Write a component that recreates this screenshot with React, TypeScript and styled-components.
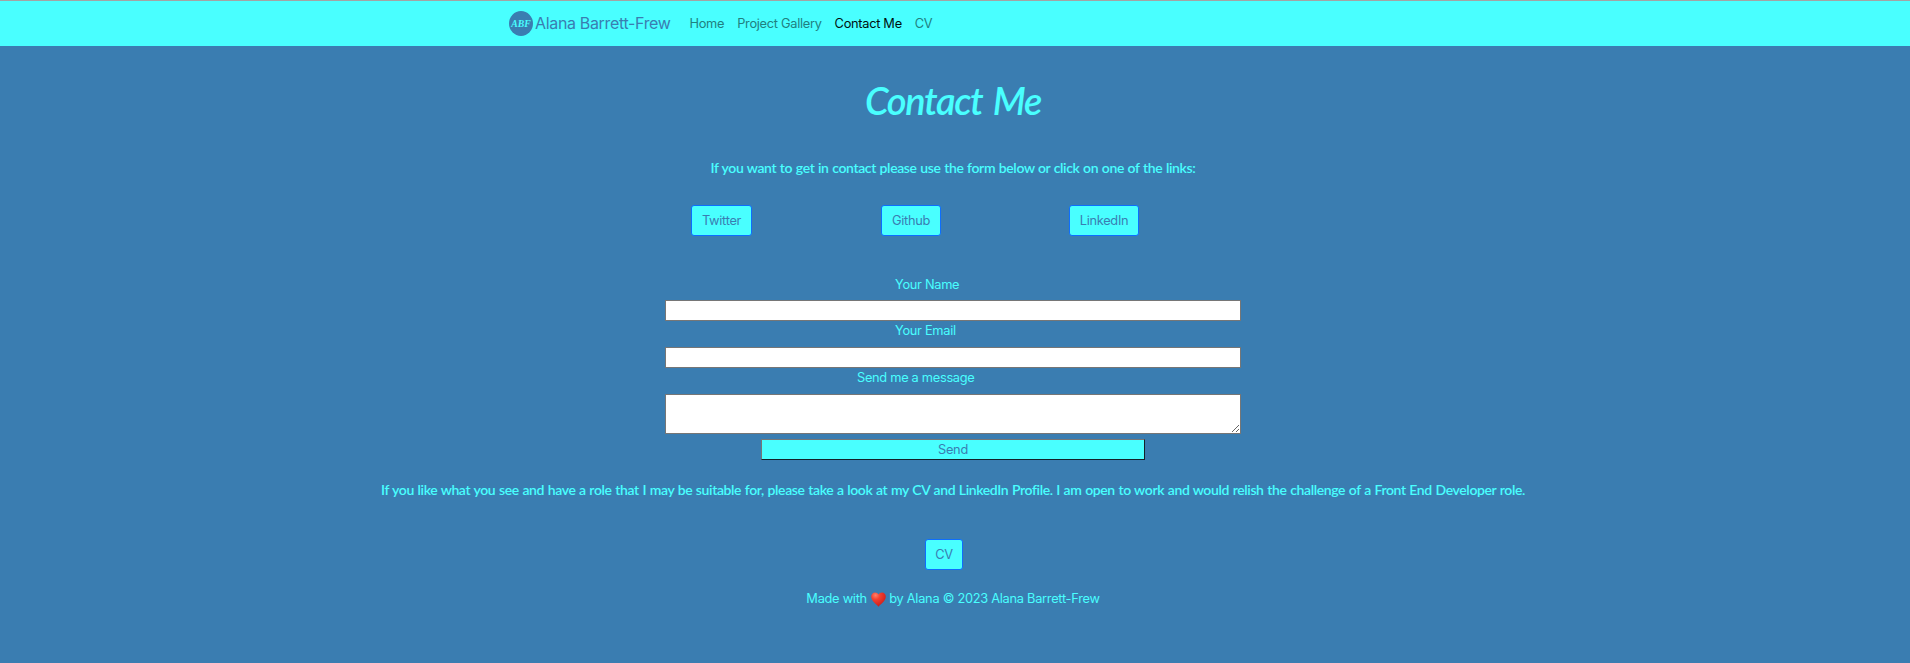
import React from 'react';
import styled, { createGlobalStyle } from 'styled-components';

const CYAN = '#49ffff';
const BLUE = '#3a7db1';

const GlobalStyle = createGlobalStyle`
  *, *::before, *::after { box-sizing: border-box; }
  body {
    margin: 0;
    background: ${BLUE};
    color: ${CYAN};
    font: 400 12.8px/20px Inter, "Liberation Sans", sans-serif;
    letter-spacing: -0.29px;
  }
`;

const Page = styled.div`
  min-height: 663px;
  overflow: hidden;
`;

const Navbar = styled.nav`
  display: flex;
  align-items: center;
  height: 46px;
  padding-left: 509px;
  background: ${CYAN};
  border-top: 1px solid #a3a3a3;
`;

const Brand = styled.a`
  display: flex;
  align-items: center;
  gap: 2px;
  width: 180.5px;
  color: ${BLUE};
  font-size: 16px;
  letter-spacing: -0.34px;
  line-height: 24px;
  white-space: nowrap;
`;

const BrandName = styled.span`
  padding-bottom: 2px;
`;

const Logo = styled.svg`
  flex: none;
  width: 24px;
  height: 25px;
  overflow: visible;
`;

const NavLinks = styled.div`
  display: flex;
  gap: 13px;
`;

const NavLink = styled.a<{ $active?: boolean }>`
  color: ${({ $active }) => ($active ? '#001010' : '#21807f')};
  white-space: nowrap;
`;

const Title = styled.h1`
  margin: 30px 0 0;
  padding-right: 4px;
  font: italic 600 38px/48px Lato, sans-serif;
  letter-spacing: -1.35px;
  word-spacing: 3px;
  text-align: center;
`;

const Lead = styled.p<{ $top: number }>`
  margin: ${({ $top }) => $top}px 0 0;
  padding-right: 4px;
  font: 600 14px/21px Lato, sans-serif;
  letter-spacing: -0.37px;
  word-spacing: 0.5px;
  text-align: center;
  white-space: nowrap;
`;

const LinkRow = styled.div`
  display: grid;
  grid-template-columns: 190px 188px 70px;
  justify-items: start;
  margin: 27px 0 0 691px;
`;

const LinkButton = styled.a<{ $width: number }>`
  display: flex;
  align-items: center;
  justify-content: center;
  width: ${({ $width }) => $width}px;
  height: 31px;
  border: 1px solid #0d6efd;
  border-radius: 3px;
  background: ${CYAN};
  color: ${BLUE};
`;

const Form = styled.form`
  display: flex;
  flex-direction: column;
  width: 576px;
  margin: 39px 0 0 665px;
`;

const Label = styled.label<{ $indent: number }>`
  height: 26px;
  padding-left: ${({ $indent }) => $indent}px;

  &:first-child {
    height: 25px;
  }
`;

const Input = styled.input`
  height: 21px;
  margin: 0;
  padding: 1px 2px;
  border: 1px solid #767676;
  border-radius: 0;
  background: #fff;
`;

const Message = styled.textarea`
  height: 40px;
  margin: 0;
  padding: 2px;
  border: 1px solid #767676;
  border-radius: 0;
  background: #fff;
  resize: both;
`;

const Send = styled.button`
  align-self: center;
  width: 384px;
  height: 21px;
  margin-top: 5px;
  padding: 0;
  border: 1px solid;
  border-color: #767676 #12222b #12222b #767676;
  background: ${CYAN};
  color: ${BLUE};
  font: inherit;
  line-height: 19px;
  letter-spacing: inherit;
`;

const CvRow = styled.div`
  margin: 39px 0 0 925px;
`;

const Footer = styled.footer`
  display: flex;
  align-items: center;
  justify-content: center;
  margin-top: 19px;
  padding-right: 4px;
  letter-spacing: -0.27px;
  white-space: pre;
`;

const Heart = styled.svg`
  width: 15px;
  height: 15px;
  margin: 0 3px 0 1px;
`;

const NAV = ['Home', 'Project Gallery', 'Contact Me', 'CV'];

export default function App() {
  return (
    <Page>
      <GlobalStyle />
      <Navbar>
        <Brand>
          <Logo viewBox="0 0 24 25">
            <ellipse cx="12" cy="12.5" rx="12" ry="12.5" fill={BLUE} />
            <text
              x="12"
              y="16"
              textAnchor="middle"
              textLength="19.5"
              lengthAdjust="spacingAndGlyphs"
              fill={CYAN}
              fontFamily="Liberation Serif, serif"
              fontSize="11"
              fontStyle="italic"
              fontWeight="700"
              letterSpacing="0"
            >
              ABF
            </text>
          </Logo>
          <BrandName>Alana Barrett-Frew</BrandName>
        </Brand>
        <NavLinks>
          {NAV.map((name) => (
            <NavLink key={name} $active={name === 'Contact Me'}>
              {name}
            </NavLink>
          ))}
        </NavLinks>
      </Navbar>

      <Title>Contact Me</Title>
      <Lead $top={33}>
        If you want to get in contact please use the form below or click on one of the links:
      </Lead>

      <LinkRow>
        <LinkButton $width={61}>Twitter</LinkButton>
        <LinkButton $width={60}>Github</LinkButton>
        <LinkButton $width={70}>LinkedIn</LinkButton>
      </LinkRow>

      <Form>
        <Label htmlFor="name" $indent={230}>Your Name</Label>
        <Input id="name" />
        <Label htmlFor="email" $indent={230}>Your Email</Label>
        <Input id="email" />
        <Label htmlFor="message" $indent={192}>Send me a message</Label>
        <Message id="message" />
        <Send type="button">Send</Send>
      </Form>

      <Lead $top={19}>
        If you like what you see and have a role that I may be suitable for, please take a look at my
        CV and LinkedIn Profile. I am open to work and would relish the challenge of a Front End
        Developer role.
      </Lead>

      <CvRow>
        <LinkButton $width={38}>CV</LinkButton>
      </CvRow>

      <Footer>
        <span>Made with </span>
        <Heart viewBox="0 0 15 15">
          <defs>
            <radialGradient id="heart" cx="0.3" cy="0.2" r="0.85">
              <stop offset="0" stopColor="#ff8069" />
              <stop offset="0.35" stopColor="#f4402f" />
              <stop offset="1" stopColor="#c81a1a" />
            </radialGradient>
          </defs>
          <path
            d="M7.5 14.8C5.8 12.4 0.2 9.3 0.2 4.6C0.2 2 1.9 0.4 4 0.4C5.6 0.4 6.9 1.2 7.5 2.6C8.1 1.2 9.4 0.4 11 0.4C13.1 0.4 14.8 2 14.8 4.6C14.8 9.3 9.2 12.4 7.5 14.8Z"
            fill="url(#heart)"
          />
        </Heart>
        <span>by Alana © 2023 Alana Barrett-Frew</span>
      </Footer>
    </Page>
  );
}
